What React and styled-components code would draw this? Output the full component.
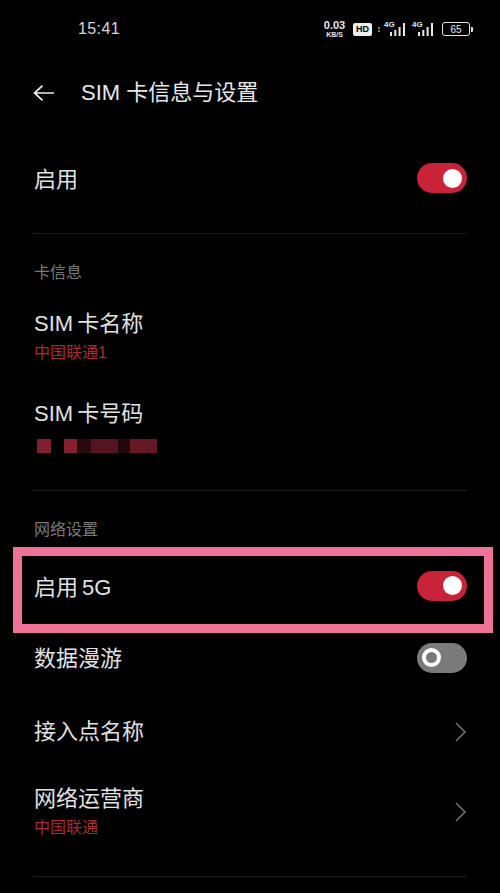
import React from "react";
import styled, { createGlobalStyle } from "styled-components";

const Global = createGlobalStyle`
  html, body { margin: 0; padding: 0; background: #000; }
  body { font-family: "Liberation Sans", "Noto Sans CJK SC", sans-serif; }
`;
const Page = styled.div`
  width: 500px; height: 893px; background: #000; color: #e6e6e6; overflow: hidden; display: flex; flex-direction: column;
`;
const StatusBar = styled.div`
  height: 58px; display: flex; align-items: center; justify-content: space-between; padding: 0 29px 0 78px; box-sizing: border-box;
`;
const Time = styled.span`
  font-size: 16px; color: #d8d8d8; letter-spacing: 0.4px;
`;
const StatusIcons = styled.div`
  display: flex; align-items: center; gap: 7px;
`;
const Speed = styled.div`
  display: flex; flex-direction: column; align-items: center; color: #e8e8e8; font-weight: 700; line-height: 12px; font-size: 11px; width: 25px;
  & > small { font-size: 7px; line-height: 8px; }
`;
const Header = styled.div`
  height: 70px; display: flex; align-items: center; gap: 27px; padding: 0 0 0 33px;
`;
const Title = styled.h1`
  margin: 0; font-size: 22px; font-weight: 400; color: #e8e8e8; line-height: 1;
`;
const Row = styled.div`
  display: flex; align-items: ${p => (p.$top ? "flex-start" : "center")}; justify-content: space-between; padding: ${p => p.$top || 0}px 33px 0 34px; height: ${p => p.$h}px; box-sizing: border-box;
`;
const Texts = styled.div`
  display: flex; flex-direction: column; gap: ${p => p.$gap || 0}px;
`;
const Label = styled.div`
  font-size: 22px; line-height: 26px; color: #e2e2e2; word-spacing: -2px;
`;
const Sub = styled.div`
  font-size: 16px; line-height: 18px; color: #a52c37;
`;
const Divider = styled.div`
  height: 1px; background: #1c1c1c; margin: ${p => p.$mt || 0}px 33px 0;
`;
const Section = styled.div`
  font-size: 16px; line-height: 18px; color: #7a7a7a; padding: 30px 34px 0; height: ${p => p.$h}px; box-sizing: border-box;
`;
const Highlight = styled.div`
  margin: 0 7px 0 13px; height: 86px; border: 9px solid #ef7298; box-sizing: border-box; display: flex; align-items: center; justify-content: space-between; padding: 0 17px 4px 12px;
`;
const Track = styled.div`
  width: 50px; height: 30px; margin-bottom: ${p => p.$lift}px; border-radius: 15px; background: ${p => (p.$on ? "#c9233a" : "#7a7a7a")}; display: flex; align-items: center; justify-content: ${p => (p.$on ? "flex-end" : "flex-start")}; padding: 0 5px; box-sizing: border-box;
`;
const Knob = styled.div`
  width: 19px; height: 19px; border-radius: 50%; box-sizing: border-box; background: ${p => (p.$on ? "#fff" : "#7a7a7a")}; border: ${p => (p.$on ? "none" : "4.5px solid #fff")};
`;
const Masked = styled.div`
  display: flex; height: 14px; margin: 12px 0 0 3px;
`;
const Pixel = styled.div`
  width: ${p => p.$w}px; background: ${p => p.$c};
`;
const Toggle = ({ on, lift = 3 }) => <Track $on={on} $lift={lift}><Knob $on={on} /></Track>;

const Chevron = () => (
  <svg width="13" height="22" viewBox="0 0 13 22" fill="none" stroke="#6e6e6e" strokeWidth="1.7"><path d="M2 2l9 9-9 9" /></svg>
);
const Back = () => (
  <svg width="21" height="16" viewBox="0 0 21 16" fill="none" stroke="#eee" strokeWidth="1.7"><path d="M9.5 0.7L1.5 8l8 7.3M1.5 8H21" /></svg>
);
const Bars = () => (
  <svg width="15" height="13" viewBox="0 0 15 13" fill="#e8e8e8"><rect x="0" y="9" width="2" height="4"/><rect x="4.3" y="7" width="2" height="6"/><rect x="8.6" y="4" width="2" height="9"/><rect x="13" y="0" width="2" height="13"/></svg>
);
const Signal = styled.div`
  display: flex; align-items: flex-end; position: relative; width: 21px; height: 14px; justify-content: flex-end;
`;
const SigText = styled.span`
  position: absolute; left: 0; top: -1px; font-size: 8px; font-weight: 700; color: #e8e8e8; line-height: 8px;
`;
const Hd = styled.div`
  width: 19px; height: 13px; margin-left: -1px; border-radius: 2px; background: #eee; color: #000; font-size: 9px; font-weight: 700; display: flex; align-items: center; justify-content: center;
`;
const Colon = styled.div`
  width: 2px; height: 1px; margin: 0 -3px 0 -1px; border-top: 2px solid #777; border-bottom: 2px solid #777;
`;
const Battery = styled.div`
  width: 26px; height: 12px; margin: 0 1px 0 2px; border: 1.3px solid #e8e8e8; border-radius: 3px; font-size: 10px; color: #e8e8e8; display: flex; align-items: center; justify-content: center; position: relative;
  &::after { content: ""; position: absolute; right: -3.5px; top: 3.5px; width: 2px; height: 5px; background: #e8e8e8; border-radius: 0 1px 1px 0; }
`;
const Sig = () => <Signal><SigText>4G</SigText><Bars /></Signal>;

export default function App() {
  return (
    <Page>
      <Global />
      <StatusBar>
        <Time>15:41</Time>
        <StatusIcons>
          <Speed>0.03<small>KB/S</small></Speed>
          <Hd>HD</Hd>
          <Colon />
          <Sig />
          <Sig />
          <Battery>65</Battery>
        </StatusIcons>
      </StatusBar>
      <Header><Back /><Title>SIM 卡信息与设置</Title></Header>
      <Row $h={103}><Label>启用</Label><Toggle on /></Row>
      <Divider $mt={2} />
      <Section $h={78}>卡信息</Section>
      <Row $h={49}>
        <Texts $gap={7}><Label>SIM 卡名称</Label><Sub>中国联通1</Sub></Texts>
      </Row>
      <Row $h={129} $top={40}>
        <Texts>
          <Label>SIM 卡号码</Label>
          <Masked>
            <Pixel $w={14} $c="#7e2030" /><Pixel $w={13} $c="#000" /><Pixel $w={13} $c="#85202f" /><Pixel $w={14} $c="#2a0a10" /><Pixel $w={27} $c="#551420" /><Pixel $w={12} $c="#22080d" /><Pixel $w={27} $c="#661825" />
          </Masked>
        </Texts>
      </Row>
      <Divider />
      <Section $h={56}>网络设置</Section>
      <Highlight><Label>启用 5G</Label><Toggle on lift={5} /></Highlight>
      <Row $h={52}><Label>数据漫游</Label><Toggle /></Row>
      <Row $h={94}><Label>接入点名称</Label><Chevron /></Row>
      <Row $h={65}>
        <Texts $gap={7}><Label>网络运营商</Label><Sub>中国联通</Sub></Texts>
        <Chevron />
      </Row>
      <Divider $mt={32} />
    </Page>
  );
}
